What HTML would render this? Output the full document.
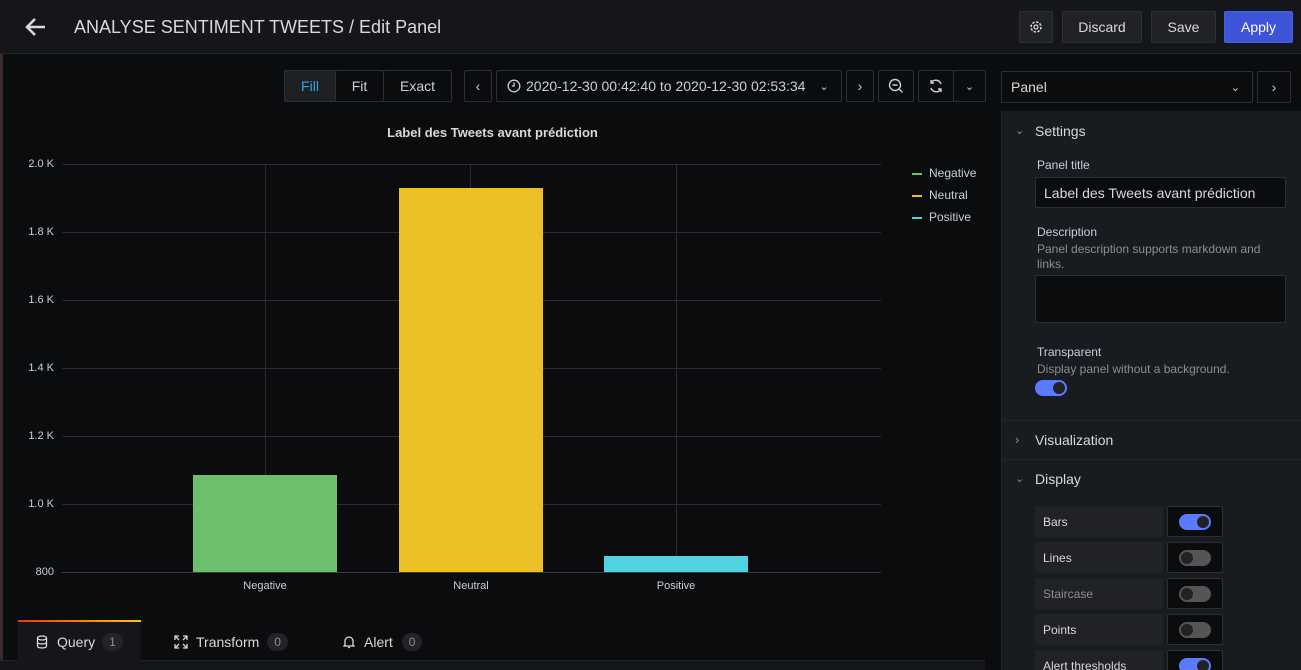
<!DOCTYPE html>
<html style="overflow:hidden;height:670px"><head><meta charset="utf-8"><style>
*{box-sizing:border-box;margin:0;padding:0}
body{width:1301px;height:670px;overflow:hidden;background:#0b0c0e;font-family:"Liberation Sans",sans-serif;color:#d8d9da;position:relative}
.abs{position:absolute}
.hdr{left:0;top:0;width:1301px;height:54px;background:#141619;border-bottom:1px solid #22252b}
.btn{position:absolute;background:#202226;border:1px solid #2c3035;border-radius:2px;color:#d8d9da;font-size:14px;display:flex;align-items:center;justify-content:center}
.tb{position:absolute;background:#0b0c0e;border:1px solid #2c3035;border-radius:2px;color:#c7d0d9;font-size:14px;display:flex;align-items:center;justify-content:center}
.side{left:1001px;top:111px;width:300px;height:559px;background:#181b1f;border-left:1px solid #22252b;overflow:hidden}
.lbl{font-size:12px;color:#ccccdc}
.sub{font-size:12px;color:#8e8e8e}
.row{position:absolute;left:33px;width:128px;height:31px;background:#202226;border-radius:2px;font-size:12px;color:#d8d9da;padding:9px 8px}
.sw{position:absolute;left:165px;width:56px;height:31px;background:#0b0c0e;border:1px solid #2c3035;border-radius:2px}
.tg{position:absolute;left:11px;top:7px;width:32px;height:16px;border-radius:8px;background:#555}
.tg.on{background:#5a7bff}
.tg i{position:absolute;top:2px;width:12px;height:12px;border-radius:50%;background:#222}
.tg.on i{left:18px}.tg i{left:2px}
.ax{font-size:11px;color:#c7d0d9}
.gl{position:absolute;left:62px;width:819px;height:1px;background:#2a2c30}
</style></head><body>
<div class="abs" style="left:0;top:0;width:3px;height:670px;background:#3a2a2a"></div>
<div class="abs hdr">
 <svg class="abs" style="left:25px;top:17px" width="22" height="20" viewBox="0 0 22 20"><path d="M20 10H3M10 2L2 10l8 8" stroke="#d8d9da" stroke-width="2.6" fill="none"/></svg>
 <div class="abs" style="left:74px;top:17px;font-size:18px;color:#d8d9da">ANALYSE SENTIMENT TWEETS / Edit Panel</div>
 <div class="btn" style="left:1019px;top:11px;width:34px;height:32px"><svg width="14" height="14" viewBox="0 0 14 14"><circle cx="7" cy="7" r="5" stroke="#d8d9da" stroke-width="1.5" fill="none" stroke-dasharray="2.5 1.4"/><circle cx="7" cy="7" r="2" stroke="#d8d9da" stroke-width="1.3" fill="none"/></svg></div>
 <div class="btn" style="left:1062px;top:11px;width:80px;height:32px">Discard</div>
 <div class="btn" style="left:1151px;top:11px;width:65px;height:32px">Save</div>
 <div class="btn" style="left:1224px;top:11px;width:69px;height:32px;background:#3d54d8;border-color:#4460e6;color:#fff">Apply</div>
</div>
<div class="tb" style="left:284px;top:70px;width:52px;height:32px;background:#1e2024;color:#33a2e5">Fill</div>
<div class="tb" style="left:335px;top:70px;width:49px;height:32px">Fit</div>
<div class="tb" style="left:383px;top:70px;width:69px;height:32px">Exact</div>
<div class="tb" style="left:464px;top:70px;width:28px;height:32px">‹</div>
<div class="tb" style="left:496px;top:70px;width:346px;height:32px;justify-content:flex-start;padding-left:10px">
 <svg width="14" height="14" viewBox="0 0 14 14" style="margin-right:5px"><circle cx="7" cy="7" r="5.8" stroke="#c7d0d9" stroke-width="1.3" fill="none"/><path d="M7 3.5V7H4.8" stroke="#c7d0d9" stroke-width="1.3" fill="none"/></svg>2020-12-30 00:42:40 to 2020-12-30 02:53:34<span style="margin-left:14px;font-size:11px">⌄</span></div>
<div class="tb" style="left:846px;top:70px;width:28px;height:32px">›</div>
<div class="tb" style="left:878px;top:70px;width:36px;height:32px"><svg width="16" height="16" viewBox="0 0 16 16"><circle cx="7" cy="7" r="5.5" stroke="#c7d0d9" stroke-width="1.4" fill="none"/><path d="M4.5 7h5M11 11l3.5 3.5" stroke="#c7d0d9" stroke-width="1.4"/></svg></div>
<div class="tb" style="left:918px;top:70px;width:36px;height:32px"><svg width="16" height="16" viewBox="0 0 16 16"><path d="M13 6A5.5 5.5 0 0 0 3 5M3 10a5.5 5.5 0 0 0 10 1M3 2v3h3M13 14v-3h-3" stroke="#c7d0d9" stroke-width="1.4" fill="none"/></svg></div>
<div class="tb" style="left:953px;top:70px;width:33px;height:32px;font-size:11px">⌄</div>
<div class="tb" style="left:1001px;top:71px;width:252px;height:32px;justify-content:space-between;padding:0 12px 0 9px;color:#d8d9da">Panel<span style="font-size:11px">⌄</span></div>
<div class="tb" style="left:1257px;top:71px;width:34px;height:32px">›</div>

<div class="abs" style="left:0;top:125px;width:985px;text-align:center;color:#d8d9da;font-weight:bold;font-size:13px">Label des Tweets avant prédiction</div>
<div class="gl" style="top:164px"></div><div class="gl" style="top:232px"></div><div class="gl" style="top:300px"></div><div class="gl" style="top:368px"></div><div class="gl" style="top:436px"></div><div class="gl" style="top:504px"></div><div class="gl" style="top:572px;background:#3a3c40"></div>
<div class="abs" style="left:265px;top:164px;width:1px;height:408px;background:#2a2c30"></div>
<div class="abs" style="left:470px;top:164px;width:1px;height:408px;background:#2a2c30"></div>
<div class="abs" style="left:676px;top:164px;width:1px;height:408px;background:#2a2c30"></div>
<div class="abs ax" style="left:0;width:54px;text-align:right;top:158px">2.0 K</div>
<div class="abs ax" style="left:0;width:54px;text-align:right;top:226px">1.8 K</div>
<div class="abs ax" style="left:0;width:54px;text-align:right;top:294px">1.6 K</div>
<div class="abs ax" style="left:0;width:54px;text-align:right;top:362px">1.4 K</div>
<div class="abs ax" style="left:0;width:54px;text-align:right;top:430px">1.2 K</div>
<div class="abs ax" style="left:0;width:54px;text-align:right;top:498px">1.0 K</div>
<div class="abs ax" style="left:0;width:54px;text-align:right;top:566px">800</div>
<div class="abs" style="left:193px;top:475px;width:144px;height:97px;background:#6cbf6c"></div>
<div class="abs" style="left:399px;top:188px;width:144px;height:384px;background:#edbf26"></div>
<div class="abs" style="left:604px;top:556px;width:144px;height:16px;background:#4fd4e0"></div>
<div class="abs ax" style="left:215px;width:100px;text-align:center;top:580px">Negative</div>
<div class="abs ax" style="left:421px;width:100px;text-align:center;top:580px">Neutral</div>
<div class="abs ax" style="left:626px;width:100px;text-align:center;top:580px">Positive</div>
<div class="abs ax" style="left:912px;top:162px;line-height:22px;font-size:12px">
<div><span style="display:inline-block;width:10px;height:2px;background:#6cbf6c;vertical-align:middle;margin-right:7px"></span>Negative</div>
<div><span style="display:inline-block;width:10px;height:2px;background:#edbf26;vertical-align:middle;margin-right:7px"></span>Neutral</div>
<div><span style="display:inline-block;width:10px;height:2px;background:#4fd4e0;vertical-align:middle;margin-right:7px"></span>Positive</div></div>

<div class="abs" style="left:18px;top:620px;width:123px;height:50px;background:#141619;border-top:2px solid;border-image:linear-gradient(90deg,#f0360a,#fbc900) 1"></div>
<div class="abs" style="left:0;top:660px;width:985px;height:10px;background:#141619;border-top:1px solid #22252b"></div>
<div class="abs" style="left:18px;top:660px;width:123px;height:2px;background:#141619"></div>
<div class="abs" style="left:36px;top:633px;font-size:14px;color:#d8d9da;display:flex;align-items:center;gap:7px"><svg width="12" height="14" viewBox="0 0 12 14"><ellipse cx="6" cy="3" rx="4.5" ry="2" stroke="#d8d9da" stroke-width="1.3" fill="none"/><path d="M1.5 3v8c0 2.6 9 2.6 9 0V3M1.5 7c0 2.6 9 2.6 9 0" stroke="#d8d9da" stroke-width="1.3" fill="none"/></svg><span style="margin-left:2px">Query</span><span style="background:#222429;border-radius:10px;padding:2px 7px;font-size:12px;color:#8e8e8e">1</span></div>
<div class="abs" style="left:174px;top:633px;font-size:14px;color:#d8d9da;display:flex;align-items:center;gap:8px"><svg width="14" height="14" viewBox="0 0 14 14"><path d="M1 5V1h4M9 1h4v4M13 9v4H9M5 13H1V9M1 1l4 4M13 1L9 5M13 13L9 9M1 13l4-4" stroke="#d8d9da" stroke-width="1.3" fill="none"/></svg>Transform<span style="background:#222429;border-radius:10px;padding:2px 7px;font-size:12px;color:#8e8e8e">0</span></div>
<div class="abs" style="left:343px;top:633px;font-size:14px;color:#d8d9da;display:flex;align-items:center;gap:9px"><svg width="12" height="14" viewBox="0 0 12 14"><path d="M2 10V6a4 4 0 0 1 8 0v4l1 1H1zM5 12.5h2" stroke="#d8d9da" stroke-width="1.3" fill="none"/></svg>Alert<span style="background:#222429;border-radius:10px;padding:2px 7px;font-size:12px;color:#8e8e8e">0</span></div>

<div class="abs side">
 <div class="abs" style="left:13px;top:13px;font-size:11px;color:#8e8e8e">⌄</div>
 <div class="abs" style="left:33px;top:12px;font-size:14px;color:#d8d9da">Settings</div>
 <div class="abs lbl" style="left:35px;top:47px">Panel title</div>
 <div class="abs" style="left:33px;top:66px;width:251px;height:31px;background:#0b0c0e;border:1px solid #2c3035;border-radius:2px;font-size:14px;padding:7px 8px;color:#d8d9da">Label des Tweets avant prédiction</div>
 <div class="abs lbl" style="left:35px;top:114px">Description</div>
 <div class="abs sub" style="left:35px;top:131px;width:240px;line-height:15px">Panel description supports markdown and links.</div>
 <div class="abs" style="left:33px;top:164px;width:251px;height:48px;background:#0b0c0e;border:1px solid #2c3035;border-radius:2px"></div>
 <div class="abs lbl" style="left:35px;top:234px">Transparent</div>
 <div class="abs sub" style="left:35px;top:251px">Display panel without a background.</div>
 <div class="tg on" style="left:33px;top:269px"><i></i></div>
 <div class="abs" style="left:0;top:309px;width:300px;height:1px;background:#22252b"></div>
 <div class="abs" style="left:13px;top:321px;font-size:13px;color:#8e8e8e">›</div>
 <div class="abs" style="left:33px;top:321px;font-size:14px;color:#d8d9da">Visualization</div>
 <div class="abs" style="left:0;top:348px;width:300px;height:1px;background:#22252b"></div>
 <div class="abs" style="left:13px;top:361px;font-size:11px;color:#8e8e8e">⌄</div>
 <div class="abs" style="left:33px;top:360px;font-size:14px;color:#d8d9da">Display</div>
 <div class="row" style="top:395px">Bars</div><div class="sw" style="top:395px"><div class="tg on"><i></i></div></div>
 <div class="row" style="top:431px">Lines</div><div class="sw" style="top:431px"><div class="tg"><i></i></div></div>
 <div class="row" style="top:467px;color:#8e8e8e">Staircase</div><div class="sw" style="top:467px"><div class="tg"><i></i></div></div>
 <div class="row" style="top:503px">Points</div><div class="sw" style="top:503px"><div class="tg"><i></i></div></div>
 <div class="row" style="top:539px">Alert thresholds</div><div class="sw" style="top:539px"><div class="tg on"><i></i></div></div>
</div>
</body></html>
